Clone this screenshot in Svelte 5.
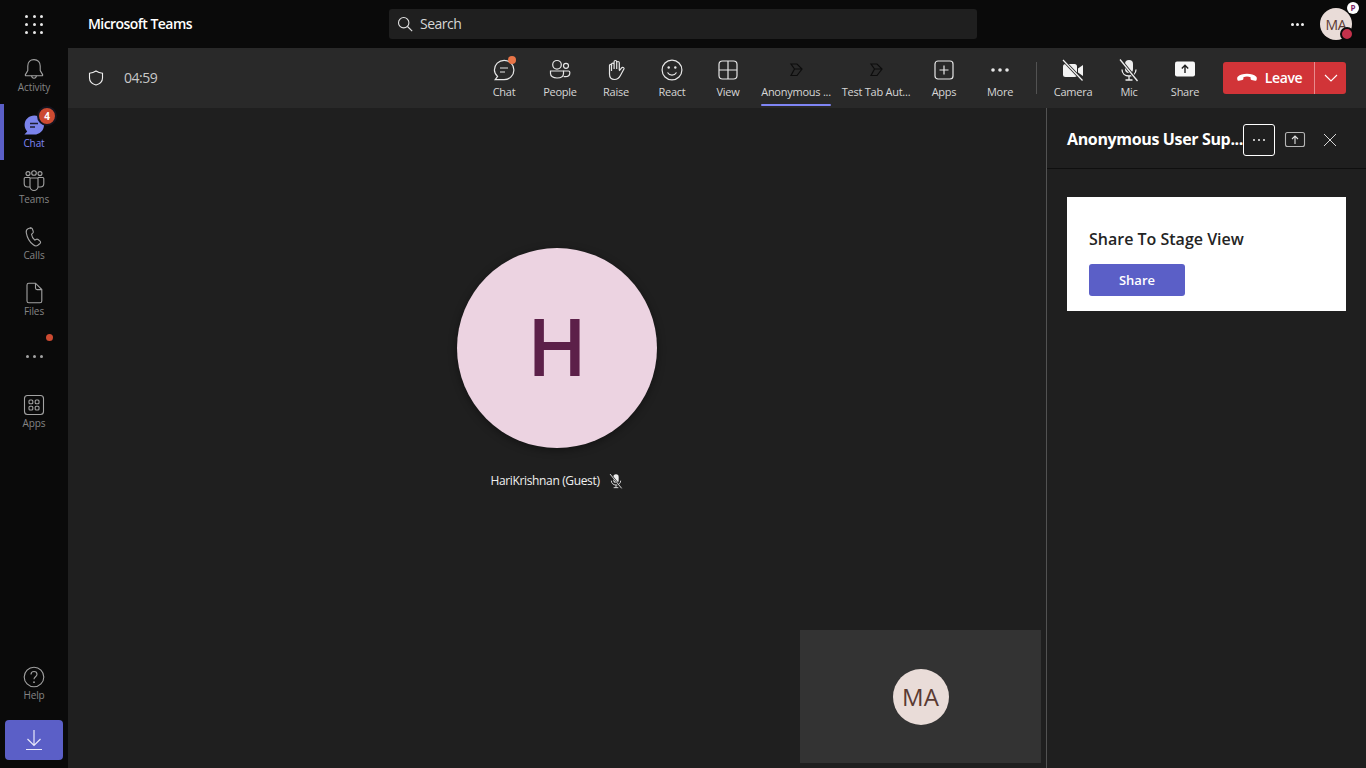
<script lang="ts">
	const rail = [
		{ id: 'activity', label: 'Activity' },
		{ id: 'chat', label: 'Chat', active: true, badge: '4' },
		{ id: 'teams', label: 'Teams' },
		{ id: 'calls', label: 'Calls' },
		{ id: 'files', label: 'Files' }
	];

	const tools = [
		{ id: 'chat', label: 'Chat' },
		{ id: 'people', label: 'People' },
		{ id: 'raise', label: 'Raise' },
		{ id: 'react', label: 'React' },
		{ id: 'view', label: 'View' },
		{ id: 'tab', label: 'Anonymous ...', wide: true, current: true },
		{ id: 'tab', label: 'Test Tab Aut...', wide: true },
		{ id: 'apps', label: 'Apps' },
		{ id: 'more', label: 'More' }
	];

	const devices = [
		{ id: 'camera', label: 'Camera' },
		{ id: 'mic', label: 'Mic' },
		{ id: 'share', label: 'Share' }
	];
</script>

{#snippet railIcon(id)}
	<svg width="24" height="24" viewBox="0 0 24 24" fill="none" stroke="#a3a3a3" stroke-width="1.1">
		{#if id === 'activity'}
			<path d="M12 2.6c-3.900 0-6.200 2.800-6.200 6.300v4.600L3.400 17.600c-.3.600 0 1.100.6 1.100h16c.6 0 .9-.5.6-1.100l-2.400-4.100V8.900c0-3.500-2.300-6.300-6.200-6.300z" />
			<path d="M9.600 18.800c.2 1.500 1.100 2.400 2.400 2.400s2.200-.9 2.400-2.400" />
		{:else if id === 'chat'}
			<path d="M12.400 2.600c5.200 0 9.600 3.900 9.600 9.400s-4.400 9.600-9.800 9.600H2.400l2.800-3.200C3.600 16.700 2.600 14.500 2.600 12c0-5.500 4.400-9.400 9.800-9.400z" fill="#7b83eb" stroke="none" />
			<path d="M8 10.500h8M8 14h5" stroke="#1f1f33" stroke-width="1.500" />
		{:else if id === 'teams'}
			<circle cx="6" cy="4.600" r="2" /><circle cx="12" cy="4" r="2.300" /><circle cx="18" cy="4.600" r="2" />
			<path d="M8 9h8v8.500c0 2.200-1.800 4-4 4s-4-1.800-4-4z" />
			<path d="M8 8.500H3.200c-.6 0-1 .4-1 1v5c0 2 1.500 3.500 3.500 3.500H8M16 8.500h4.800c.6 0 1 .4 1 1v5c0 2-1.500 3.500-3.500 3.500H16" />
		{:else if id === 'calls'}
			<path d="M8.600 2.800 6 3.800C4.500 4.500 4 6 4.300 7.800c.8 4.500 3.500 9.300 7 12 1.500 1.200 3.200 1.500 4.500.5l2.200-1.800c.8-.7.8-1.700 0-2.400l-1.900-1.600c-.7-.5-1.400-.5-2.100-.1l-1.200.7c-1.700-1.400-3-3.700-3.300-5.900l1.100-.8c.7-.5.9-1.300.6-2.100l-.9-2.500c-.3-.5-1-.9-1.700-.5z" />
		{:else if id === 'files'}
			<path d="M5 4c0-1 .8-1.800 1.800-1.800h6.700L19.800 8.500V20c0 1-.8 1.800-1.800 1.800H6.800C5.800 21.800 5 21 5 20z" />
			<path d="M13.500 2.500V7c0 1 .6 1.600 1.600 1.600h4.500" />
		{/if}
	</svg>
{/snippet}

{#snippet micOff(size)}
	<svg width={size} height={size} viewBox="0 0 24 24" fill="none" stroke="#ededed" stroke-width="1.300">
		<rect x="8" y="2" width="8" height="13" rx="4" fill="#ededed" stroke="none" />
		<path d="M5 11.500c0 4 3 6.500 7 6.500s7-2.500 7-6.500M12 18v4M8.500 22h7" />
		<path d="M3.500 2 20.500 23" stroke="#292929" stroke-width="3" />
		<path d="M3 1.500 20.500 23" />
	</svg>
{/snippet}

{#snippet toolIcon(id)}
	<svg width="24" height="24" viewBox="0 0 24 24" fill="none" stroke="#e6e6e6" stroke-width="1.200">
		{#if id === 'chat'}
			<path d="M12.200 2.300c5.400 0 9.700 4.200 9.700 9.600s-4.400 9.800-9.900 9.800H3.200l2.400-3.300C3.600 16.600 2.400 14.400 2.400 12c0-5.500 4.300-9.700 9.800-9.700z" />
			<path d="M8 10h8M8 14h5" />
		{:else if id === 'people'}
			<circle cx="9" cy="6.800" r="4.300" />
			<circle cx="18" cy="7.800" r="2.500" />
			<path d="M2.500 13h13v2.500c0 2.800-2.700 4.500-6.500 4.500s-6.500-1.700-6.500-4.500z" />
			<path d="M15.500 13h5c.8 0 1.300.5 1.300 1.300v.7c0 2.200-1.800 3.700-4.500 3.700-.6 0-1.200-.1-1.700-.2" />
		{:else if id === 'raise'}
			<path d="M7.500 13V6.500a1.300 1.300 0 0 1 2.600 0V11V3.800a1.300 1.300 0 0 1 2.600 0V11V4.800a1.300 1.300 0 0 1 2.600 0V12l.3.300 2-2.500c.8-1 3-.2 2.300 1.300l-3.500 6.400c-1.300 2.500-3 4-5.900 4-3.300 0-5-2.200-5-5.500V7.600a1.200 1.200 0 0 1 2.400 0" />
		{:else if id === 'react'}
			<circle cx="12" cy="12" r="9.900" />
			<circle cx="8.700" cy="9.500" r="1.200" fill="#e6e6e6" stroke="none" />
			<circle cx="15.300" cy="9.500" r="1.200" fill="#e6e6e6" stroke="none" />
			<path d="M7.500 14.500c1 1.700 2.600 2.600 4.500 2.600s3.500-.9 4.500-2.600" />
		{:else if id === 'view'}
			<rect x="3" y="3" width="18" height="18" rx="3.500" />
			<path d="M12 3v18M3 12h18" />
		{:else if id === 'tab'}
			<path d="M7 6h6l5 5-5 6.500H7l3.500-6.500zM7 6l3.500 5H18" stroke="#0d0d0d" stroke-width="1.200" />
		{:else if id === 'apps'}
			<rect x="3" y="3" width="18" height="18" rx="3" />
			<path d="M12 7.500v9M7.500 12h9" />
		{:else if id === 'more'}
			<circle cx="5" cy="12" r="1.800" fill="#e6e6e6" stroke="none" />
			<circle cx="12" cy="12" r="1.800" fill="#e6e6e6" stroke="none" />
			<circle cx="19" cy="12" r="1.800" fill="#e6e6e6" stroke="none" />
		{:else if id === 'camera'}
			<rect x="2" y="6" width="14" height="13" rx="2.500" fill="#f2f2f2" stroke="none" />
			<path d="m17 10.500 5-3.500v11l-5-3.500z" fill="#f2f2f2" stroke="none" />
			<path d="M2.500 2.500 21 22" stroke="#292929" stroke-width="3" />
			<path d="M2 2 21.500 22.500" stroke="#f2f2f2" />
		{:else if id === 'share'}
			<rect x="2" y="3.500" width="20" height="15" rx="2" fill="#f7f7f7" stroke="none" />
			<path d="M12 15V7.500M8.800 10.500 12 7.300l3.200 3.200" stroke="#1f1f1f" stroke-width="1.400" />
		{/if}
	</svg>
{/snippet}

<div class="app">
	<header class="topbar">
		<div class="waffle">
			{#each Array(9) as _}<i></i>{/each}
		</div>
		<div class="brand">Microsoft Teams</div>
		<div class="search">
			<svg width="16" height="16" viewBox="0 0 16 16" fill="none" stroke="#e0e0e0" stroke-width="1.100">
				<circle cx="6.700" cy="6.700" r="5.200" /><path d="m10.500 10.500 4.700 4.700" />
			</svg>
			<span>Search</span>
		</div>
		<div class="top-right">
			<div class="dots"><i></i><i></i><i></i></div>
			<div class="me">
				MA
				<span class="org">P</span>
				<span class="presence"></span>
			</div>
		</div>
	</header>

	<div class="body">
		<nav class="rail">
			{#each rail as item}
				<div class="rail-item" class:active={item.active}>
					<div class="rail-icon">
						{@render railIcon(item.id)}
						{#if item.badge}<span class="badge">{item.badge}</span>{/if}
					</div>
					<span>{item.label}</span>
				</div>
			{/each}
			<div class="rail-more">
				<b></b>
				<div class="rail-dots"><i></i><i></i><i></i></div>
			</div>
			<div class="rail-item">
				<div class="rail-icon">
					<svg width="24" height="24" viewBox="0 0 24 24" fill="none" stroke="#a3a3a3" stroke-width="1.100">
						<rect x="2.500" y="2.500" width="19" height="19" rx="3" />
						<rect x="7" y="7" width="3.800" height="3.800" rx="1" /><rect x="13.200" y="7" width="3.800" height="3.800" rx="1" />
						<rect x="7" y="13.200" width="3.800" height="3.800" rx="1" /><rect x="13.200" y="13.200" width="3.800" height="3.800" rx="1" />
					</svg>
				</div>
				<span>Apps</span>
			</div>
			<div class="rail-spacer"></div>
			<div class="rail-item help">
				<div class="rail-icon">
					<svg width="24" height="24" viewBox="0 0 24 24" fill="none" stroke="#a3a3a3" stroke-width="1.100">
						<circle cx="12" cy="12" r="9.800" />
						<path d="M9 9.500c0-1.800 1.300-3 3-3s3 1.100 3 2.800c0 2.400-3 2.500-3 5" />
						<circle cx="12" cy="17.200" r=".9" fill="#a3a3a3" stroke="none" />
					</svg>
				</div>
				<span>Help</span>
			</div>
			<div class="download">
				<svg width="20" height="22" viewBox="0 0 20 22" fill="none" stroke="#e8e8fa" stroke-width="1.200">
					<path d="M10 1v15M3.500 10 10 16.500 16.500 10M2 20.500h16" />
				</svg>
			</div>
		</nav>

		<main class="meeting">
			<div class="toolbar">
				<div class="timer">
					<svg width="18" height="18" viewBox="0 0 18 18" fill="none" stroke="#f0f0f0" stroke-width="1.100">
						<path d="M9 2c2 1.300 4 2 6.500 2.200V9c0 3.500-2.500 5.800-6.500 7-4-1.200-6.500-3.500-6.500-7V4.200C5 4 7 3.300 9 2z" />
					</svg>
					<span>04:59</span>
				</div>
				<div class="tools">
					{#each tools as tool}
						<div class="tool" class:wide={tool.wide} class:current={tool.current}>
							<div class="tool-icon">
								{@render toolIcon(tool.id)}
								{#if tool.label === 'Chat'}<b class="tool-dot"></b>{/if}
							</div>
							<span>{tool.label}</span>
						</div>
					{/each}
					<div class="divider"></div>
					{#each devices as tool}
						<div class="tool">
							<div class="tool-icon">
								{#if tool.id === 'mic'}{@render micOff(24)}{:else}{@render toolIcon(tool.id)}{/if}
							</div>
							<span>{tool.label}</span>
						</div>
					{/each}
					<div class="leave">
						<div class="leave-main">
							<svg width="20" height="10" viewBox="0 0 20 10" fill="#fff">
								<path d="M10 .8C6 .8 2.800 1.800 1 3.500.2 4.300 0 5 .3 6.500c.2 1 .7 1.500 1.600 1.300l3.400-.7c.8-.2 1.100-.7 1.100-1.500V4.200c1-.4 2.300-.6 3.600-.6s2.600.2 3.600.6v1.400c0 .8.300 1.300 1.100 1.500l3.400.7c.9.200 1.400-.3 1.600-1.300.3-1.500.1-2.200-.7-3C17.200 1.800 14 .8 10 .8z" />
							</svg>
							<span>Leave</span>
						</div>
						<div class="leave-caret">
							<svg width="14" height="8" viewBox="0 0 14 8" fill="none" stroke="#fff" stroke-width="1.100"><path d="m1 1 6 6 6-6" /></svg>
						</div>
					</div>
				</div>
			</div>

			<div class="content">
				<section class="stage">
					<div class="participant">
						<div class="avatar">H</div>
						<div class="name">
							<span>HariKrishnan (Guest)</span>
							{@render micOff(16)}
						</div>
					</div>
					<div class="self">
						<div class="self-avatar">MA</div>
					</div>
				</section>

				<aside class="panel">
					<div class="panel-head">
						<span class="panel-title">Anonymous User Sup...</span>
						<div class="focus-btn"><i></i><i></i><i></i></div>
						<svg class="panel-icon" width="22" height="18" viewBox="0 0 22 18" fill="none" stroke="#b5b5b5" stroke-width="1.100">
							<rect x="1.500" y="1.500" width="19" height="14" rx="2" />
							<path d="M11 13V5M8 8l3-3 3 3" stroke="#e0e0e0" />
						</svg>
						<svg class="panel-close" width="14" height="14" viewBox="0 0 14 14" fill="none" stroke="#d6d6d6" stroke-width="1">
							<path d="m1 1 12 12M13 1 1 13" />
						</svg>
					</div>
					<div class="panel-body">
						<div class="card">
							<h2>Share To Stage View</h2>
							<button class="share-btn">Share</button>
						</div>
					</div>
				</aside>
			</div>
		</main>
	</div>
</div>

<style>
	:global(body) {
		margin: 0;
		background: #0a0a0a;
		font-family: "Open Sans", "Noto Sans", "Liberation Sans", sans-serif;
		overflow: hidden;
	}

	i {
		display: block;
	}

	.app {
		width: 1366px;
		height: 768px;
		display: flex;
		flex-direction: column;
		overflow: hidden;
		color: #fff;
	}

	.topbar {
		height: 48px;
		flex: none;
		display: flex;
		align-items: center;
		background: #0a0a0a;
	}

	.waffle {
		width: 18px;
		margin-left: 25px;
		display: grid;
		grid-template-columns: repeat(3, 3px);
		justify-content: space-between;
		row-gap: 5px;
	}

	.waffle i {
		width: 3px;
		height: 3px;
		border-radius: 50%;
		background: #e8e8e8;
	}

	.brand {
		margin-left: 45px;
		padding-bottom: 2px;
		width: 301px;
		font-size: 14px;
		font-weight: 600;
		letter-spacing: -0.55px;
	}

	.search {
		width: 588px;
		height: 30px;
		box-sizing: border-box;
		padding-left: 8px;
		display: flex;
		align-items: center;
		gap: 7px;
		background: #1f1f1f;
		border-radius: 3px;
		font-size: 14px;
		letter-spacing: -0.5px;
		color: #d6d6d6;
	}

	.search span {
		margin-bottom: 2px;
	}

	.top-right {
		margin-left: auto;
		padding-right: 14px;
		display: flex;
		align-items: center;
		gap: 16px;
	}

	.dots {
		display: flex;
		gap: 2px;
	}

	.dots i {
		width: 3px;
		height: 3px;
		border-radius: 50%;
		background: #f0f0f0;
	}

	.me {
		position: relative;
		width: 32px;
		height: 32px;
		border-radius: 50%;
		background: #e9dcd8;
		color: #5a3a32;
		font-size: 14px;
		display: flex;
		align-items: center;
		justify-content: center;
		letter-spacing: -0.2px;
	}

	.org {
		position: absolute;
		top: -6px;
		right: -7px;
		width: 12px;
		height: 12px;
		border-radius: 50%;
		background: #fff;
		color: #7a1f6a;
		font-size: 8px;
		font-weight: 700;
		line-height: 12px;
		text-align: center;
	}

	.presence {
		position: absolute;
		right: -2px;
		bottom: -1px;
		width: 10px;
		height: 10px;
		border-radius: 50%;
		background: #c4314b;
		border: 2px solid #0a0a0a;
	}

	.body {
		flex: 1;
		min-height: 0;
		display: flex;
	}

	.rail {
		width: 68px;
		flex: none;
		display: flex;
		flex-direction: column;
		background: #0a0a0a;
	}

	.rail-item {
		height: 56px;
		flex: none;
		display: flex;
		flex-direction: column;
		align-items: center;
		padding-top: 9px;
		box-sizing: border-box;
		color: #858585;
		font-size: 10px;
		letter-spacing: -0.1px;
		position: relative;
	}

	.rail-item span {
		line-height: 14px;
		margin-top: -1px;
	}

	.rail-item.help {
		margin-bottom: 8px;
	}

	.rail-item.active {
		color: #7f85f5;
	}

	.rail-item.active::before {
		content: "";
		position: absolute;
		left: 0;
		top: 0;
		bottom: 0;
		width: 4px;
		background: #5b5fc7;
	}

	.rail-icon {
		position: relative;
		height: 24px;
	}

	.rail-item .badge {
		position: absolute;
		top: -7px;
		right: -11px;
		width: 16px;
		height: 16px;
		margin: 0;
		border-radius: 50%;
		background: #cc4a31;
		border: 2px solid #14141f;
		color: #fff;
		font-size: 10px;
		font-weight: 700;
		line-height: 16px;
		text-align: center;
	}

	.rail-more {
		height: 56px;
		flex: none;
		position: relative;
		display: flex;
		align-items: center;
		justify-content: center;
	}

	.rail-more b {
		position: absolute;
		top: 6px;
		left: 46px;
		width: 7px;
		height: 7px;
		border-radius: 50%;
		background: #cc4a31;
	}

	.rail-dots {
		display: flex;
		gap: 4px;
	}

	.rail-dots i {
		width: 3px;
		height: 3px;
		border-radius: 50%;
		background: #a3a3a3;
	}

	.rail-spacer {
		flex: 1;
	}

	.download {
		width: 58px;
		height: 40px;
		flex: none;
		margin: 0 0 8px 5px;
		background: #5b5fc7;
		border-radius: 4px;
		display: flex;
		align-items: center;
		justify-content: center;
	}

	.meeting {
		flex: 1;
		min-width: 0;
		display: flex;
		flex-direction: column;
		background: #1f1f1f;
	}

	.toolbar {
		height: 60px;
		flex: none;
		display: flex;
		align-items: center;
		background: #292929;
	}

	.timer {
		display: flex;
		align-items: center;
		gap: 19px;
		padding-left: 19px;
		font-size: 14px;
		letter-spacing: -0.5px;
		color: #c8c8c8;
	}

	.timer span {
		margin-bottom: 2px;
	}

	.tools {
		margin-left: auto;
		height: 100%;
		display: flex;
		align-items: center;
		padding-right: 20px;
	}

	.tool {
		width: 56px;
		height: 60px;
		box-sizing: border-box;
		padding-top: 10px;
		position: relative;
		display: flex;
		flex-direction: column;
		align-items: center;
		font-size: 11px;
		letter-spacing: -0.25px;
		color: #d6d6d6;
		white-space: nowrap;
	}

	.tool.wide {
		width: 80px;
	}

	.tool span {
		line-height: 16px;
		margin-top: 2px;
	}

	.tool.current::after {
		content: "";
		position: absolute;
		left: 5px;
		right: 5px;
		bottom: 2px;
		height: 2px;
		border-radius: 1px;
		background: #7f85f5;
	}

	.tool-icon {
		position: relative;
		height: 24px;
	}

	.tool-dot {
		position: absolute;
		top: -2px;
		right: 0;
		width: 8px;
		height: 8px;
		border-radius: 50%;
		background: #e97548;
	}

	.divider {
		width: 1px;
		height: 32px;
		margin: 0 8px;
		background: #525252;
	}

	.leave {
		margin-left: 10px;
		width: 123px;
		height: 32px;
		display: flex;
		background: #d13438;
		border-radius: 3px;
		font-size: 14px;
		font-weight: 600;
	}

	.leave-main {
		flex: 1;
		display: flex;
		align-items: center;
		justify-content: center;
		gap: 8px;
		letter-spacing: -0.4px;
		padding-left: 2px;
	}

	.leave-main span {
		margin-bottom: 1px;
	}

	.leave-caret {
		width: 31px;
		display: flex;
		align-items: center;
		justify-content: center;
		border-left: 1px solid #e88a8c;
	}

	.content {
		flex: 1;
		min-height: 0;
		display: flex;
	}

	.stage {
		flex: 1;
		min-width: 0;
		position: relative;
		padding-top: 140px;
	}

	.participant {
		width: 200px;
		margin-left: 389px;
		display: flex;
		flex-direction: column;
		align-items: center;
	}

	.avatar {
		width: 200px;
		height: 200px;
		flex: none;
		border-radius: 50%;
		background: #ecd3e1;
		color: #5c2049;
		font-size: 80px;
		font-weight: 600;
		line-height: 194px;
		text-align: center;
		box-shadow: 0 2px 8px rgba(0, 0, 0, 0.4);
	}

	.name {
		margin-top: 24px;
		display: flex;
		align-items: center;
		gap: 8px;
		font-size: 12px;
		letter-spacing: -0.35px;
		white-space: nowrap;
		color: #f0f0f0;
	}

	.self {
		position: absolute;
		right: 5px;
		bottom: 5px;
		width: 241px;
		height: 133px;
		background: #333;
		display: flex;
		align-items: center;
		justify-content: center;
	}

	.self-avatar {
		width: 56px;
		height: 56px;
		border-radius: 50%;
		background: #e9dcd8;
		color: #5a3a32;
		font-size: 24px;
		font-weight: 500;
		line-height: 56px;
		text-align: center;
	}

	.panel {
		width: 319px;
		flex: none;
		border-left: 1px solid #525252;
		display: flex;
		flex-direction: column;
	}

	.panel-head {
		height: 61px;
		flex: none;
		box-sizing: border-box;
		padding: 4px 0 0 20px;
		display: flex;
		align-items: center;
		border-bottom: 1px solid #0f0f0f;
	}

	.panel-title {
		width: 176px;
		margin-top: -2px;
		font-size: 16px;
		font-weight: 700;
		letter-spacing: -0.35px;
		white-space: nowrap;
	}

	.focus-btn {
		width: 32px;
		height: 32px;
		box-sizing: border-box;
		border: 1px solid #fff;
		border-radius: 3px;
		display: flex;
		align-items: center;
		justify-content: center;
		gap: 3px;
	}

	.focus-btn i {
		width: 2px;
		height: 2px;
		border-radius: 50%;
		background: #f0f0f0;
	}

	.panel-icon {
		margin-left: 9px;
	}

	.panel-close {
		margin-left: 17px;
	}

	.panel-body {
		padding: 28px 20px 0;
	}

	.card {
		height: 114px;
		box-sizing: border-box;
		padding: 32px 22px 0;
		background: #fff;
	}

	.card h2 {
		margin: 0;
		font-size: 16px;
		font-weight: 600;
		line-height: 20px;
		color: #242424;
	}

	.share-btn {
		display: block;
		margin-top: 15px;
		width: 96px;
		height: 32px;
		padding: 0;
		border: none;
		border-radius: 3px;
		background: #5b5fc7;
		color: #fff;
		font-family: inherit;
		font-size: 13px;
		font-weight: 600;
	}
</style>
